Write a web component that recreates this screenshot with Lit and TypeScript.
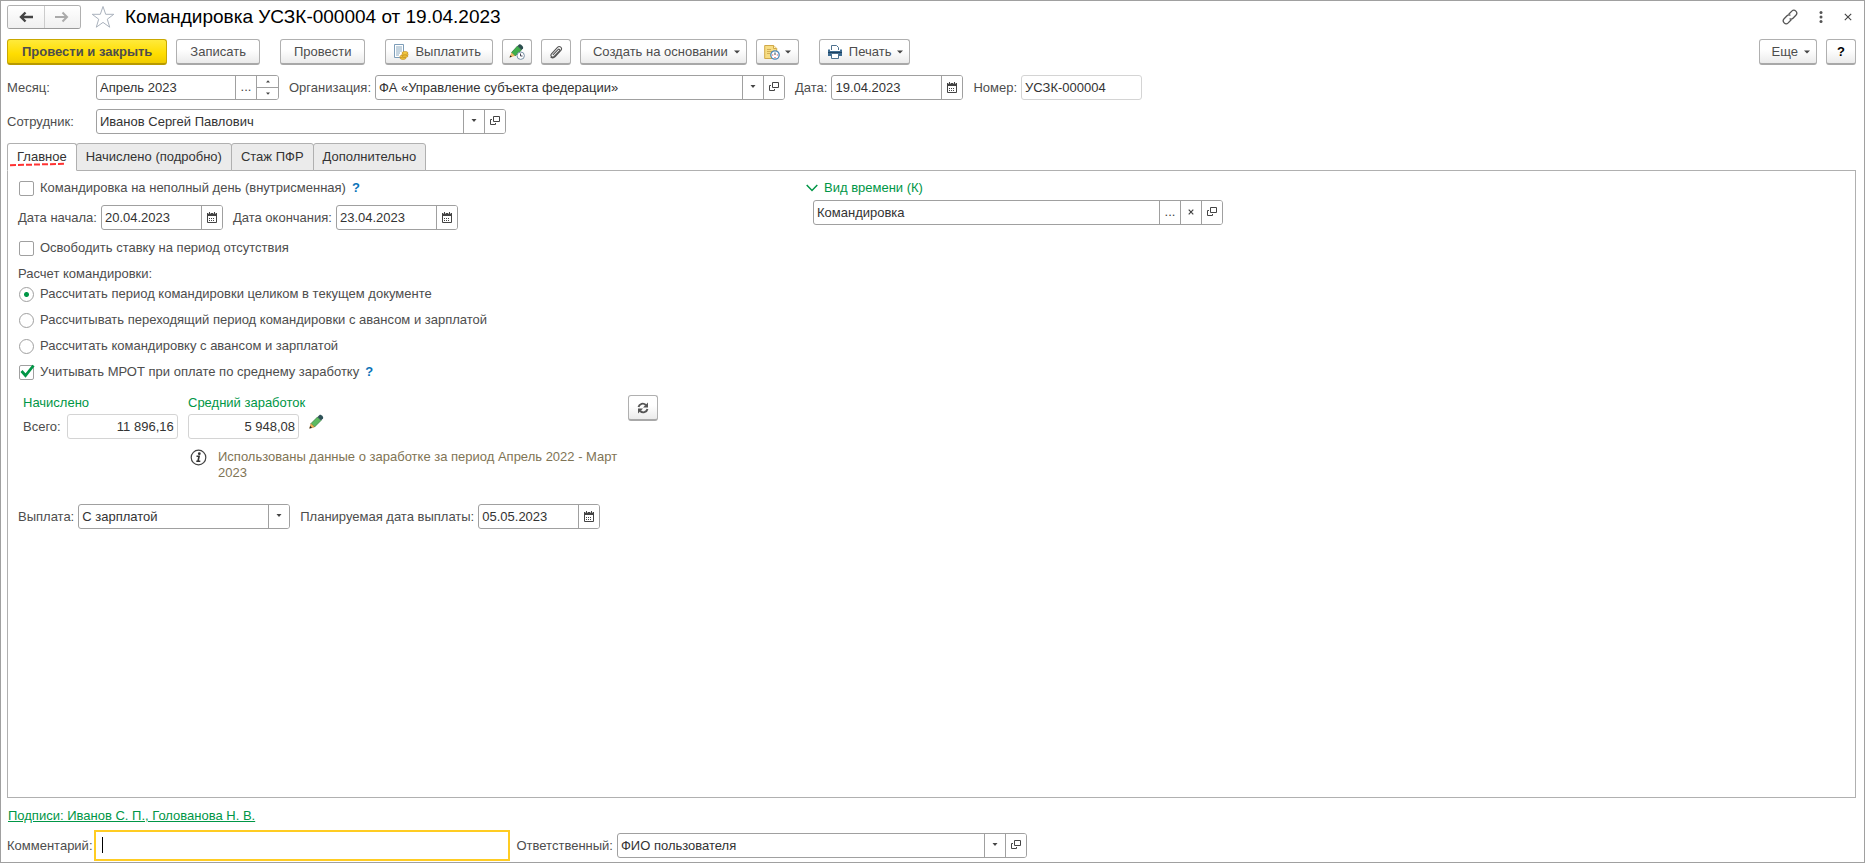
import { LitElement, html, css, svg, nothing } from "lit";
import { customElement, property } from "lit/decorators.js";

const box = (w: number, h: number, body: unknown) =>
  html`<svg width=${w} height=${h} viewBox="0 0 ${w} ${h}" aria-hidden="true">${body}</svg>`;

const icons = {
  back: box(14, 12, svg`<path d="M6.500 1.500 2 6l4.500 4.500M2 6h12" fill="none" stroke="#444" stroke-width="2.400"/>`),
  forward: box(14, 12, svg`<path d="M7.500 1.500 12 6l-4.500 4.500M12 6H0" fill="none" stroke="#aaa" stroke-width="2"/>`),
  star: box(24, 24, svg`<path d="M12 1.500l2.700 7.800h8.100l-6.500 4.900 2.400 8-6.700-4.800-6.700 4.800 2.400-8-6.500-4.900h8.100z" fill="#fff" stroke="#aab2bd"/>`),
  link: box(16, 16, svg`<g fill="none" stroke="#555" stroke-width="1.300" stroke-linecap="round"><path d="M7 5l2.800-2.900a2.900 2.900 0 0 1 4.100 4.100L11 9.200a2.900 2.900 0 0 1-3 .7"/><path d="M9 11l-2.800 2.900a2.900 2.900 0 0 1-4.100-4.100L5 6.800a2.900 2.900 0 0 1 3-.7"/></g>`),
  dots: box(4, 12, svg`<g fill="#555"><circle cx="2" cy="1.600" r="1.500"/><circle cx="2" cy="6" r="1.500"/><circle cx="2" cy="10.400" r="1.500"/></g>`),
  close: box(8, 8, svg`<path d="M.8.8l6.400 6.400M7.200.8.8 7.200" stroke="#444" stroke-width="1.100"/>`),
  clear: box(6, 6, svg`<path d="M.7.7l4.600 4.600M5.300.7.7 5.300" stroke="#444" stroke-width="1.200"/>`),
  caret: box(6, 4, svg`<path d="M0 .5h6L3 3.500z" fill="#444"/>`),
  smallCaret: box(6, 4, svg`<path d="M.5 0h5L3 3z" fill="#444"/>`),
  up: box(4, 3, svg`<path d="M0 2.500h4L2 .2z" fill="#444"/>`),
  down: box(4, 3, svg`<path d="M0 .5h4L2 2.800z" fill="#444"/>`),
  open: box(10, 10, svg`<g fill="none" stroke="#444"><path d="M3.500.5h6v5h-6z"/><path d="M2 3.500H.5v5h5V7"/></g>`),
  calendar: box(10, 11, svg`<path d="M.5 2.500h9v8h-9z" fill="#fff" stroke="#444"/><path d="M0 1h10v3H0z" fill="#444"/><path d="M2.500 0v2M7.500 0v2" stroke="#444"/><path d="M1.500 1v1M3.500 1v1M6.500 1v1M8.500 1v1" stroke="#fff" stroke-width=".6"/><path d="M2 6.500h6M2 8.500h6" stroke="#444" stroke-dasharray="1 1"/>`),
  pay: box(16, 16, svg`<path d="M1.500.5h9v13h-9z" fill="#fff" stroke="#7d9db8"/><path d="M3 3h6M3 5h6M3 7h6M3 9h4M3 11h3" stroke="#8aa9c0"/><g fill="#f6cf45" stroke="#c08a1c" stroke-width=".7"><ellipse cx="10" cy="14" rx="3" ry="1.400"/><ellipse cx="10" cy="12.500" rx="3" ry="1.400"/><ellipse cx="12" cy="12" rx="3" ry="1.400"/><ellipse cx="12" cy="10.500" rx="3" ry="1.400"/><ellipse cx="12" cy="9" rx="3" ry="1.400"/></g>`),
  pencilClock: box(16, 16, svg`<path d="M2.500 8.500 8.500 2 12.500 6 6 12z" fill="#3fae4b" stroke="#237a33" stroke-width=".7"/><path d="M8.500 2 10 .5c1.500-.9 5 2.200 4 4L12.500 6z" fill="#2c4f4e"/><path d="M.5 13.500 2.500 8.500 6 12z" fill="#efb765"/><path d="M.5 13.500l.9-2.200 1.500 1.400z" fill="#222"/><circle cx="11.700" cy="11.700" r="3.700" fill="#fff" stroke="#7891a6"/><path d="M11.500 9.500v2.500h2" fill="none" stroke="#445"/>`),
  clip: box(14, 14, svg`<path d="M4.200 9.700 9 4.600c1-1 2.400.3 1.500 1.300l-5.300 5.500c-1.800 1.800-4.400-.6-2.700-2.500l6-6.500c2.100-2.200 5.300.7 3.400 3l-5.700 6.200c-1.300 1.300-2.900 1.600-4.200.6" fill="none" stroke="#555" stroke-width="1.100" stroke-linecap="round"/>`),
  noteClock: box(16, 16, svg`<path d="M.7 1.500h9l3 3v10h-12z" fill="#f7dd83" stroke="#d0a94b"/><path d="M9.500 1.500v3h3" fill="#fff3c4" stroke="#d0a94b"/><path d="M3 5.500h4M3 7.500h5M3 9.500h3" stroke="#d3ae55"/><circle cx="11" cy="11" r="4.200" fill="#fff" stroke="#4c86b8" stroke-width="1.300"/><path d="M11 11V8.500" stroke="#345"/><path d="M8.200 11h1M12.800 11h1M11 13v1" stroke="#d33"/>`),
  printer: box(16, 16, svg`<path d="M4.500 6V1.500h5l2 2V6" fill="#fff" stroke="#4d718f"/><path d="M1 5.500h2v1.500h10V5.500h2V12H1z" fill="#3e6c92"/><path d="M1 8.500h14" stroke="#1d4261"/><path d="M4.500 9.500h7v5h-7z" fill="#fff" stroke="#4d718f"/>`),
  pencil: box(15, 15, svg`<path d="M2 9.500 8.500 3 12 6.500 5.500 13z" fill="#5cba5f" stroke="#2f7d3b" stroke-width=".7"/><path d="M8.500 3 10.500 1c1.500-.9 4.500 2 3.500 3.500l-2 2z" fill="#2f5257"/><path d="M.7 14.300 2 9.500 5.500 13z" fill="#f0b154" stroke="#a8762c" stroke-width=".5"/><path d="M.4 14.600l.8-2.600 1.800 1.800z" fill="#222"/>`),
  refresh: box(12, 12, svg`<g fill="none" stroke="#555" stroke-width="1.900"><path d="M1.500 5A4.300 4.300 0 0 1 8.800 3"/><path d="M10.500 7A4.300 4.300 0 0 1 3.200 9"/></g><path d="M11 .5V5.500H6zM1 11.500V6.500h5z" fill="#555"/>`),
  info: box(17, 17, svg`<circle cx="8.500" cy="8.500" r="7.300" fill="#fff" stroke="#444" stroke-width="1.200"/><circle cx="9.300" cy="4.700" r="1.400" fill="#333"/><path d="M6.500 7.300h2.600l-1.100 4.900M6.300 12.300h4" fill="none" stroke="#333" stroke-width="1.600"/>`),
  chevron: box(12, 8, svg`<path d="M.7 1 6 6.500 11.300 1" fill="none" stroke="#009646" stroke-width="1.500"/>`),
  tick: box(17, 15, svg`<path d="M2.500 7 6.500 11.500 14.500 1.500" fill="none" stroke="#009646" stroke-width="2.800"/>`),
};

type Action = "dots" | "spin" | "list" | "open" | "date" | "clear";

const titles: Record<string, string> = {
  dots: "Выбрать", list: "Показать список", open: "Открыть", date: "Выбрать дату", clear: "Очистить",
};

@customElement("form-field")
export class FormField extends LitElement {
  @property() label = "";
  @property() value = "";
  @property({ attribute: false }) actions: Action[] = [];
  @property({ type: Boolean }) locked = false;
  @property({ type: Boolean }) numeric = false;
  @property({ type: Boolean }) choice = false;
  @property({ type: Boolean }) active = false;

  static styles = css`
    :host { display: flex; align-items: center; gap: 4px; font: 13px/16px "Liberation Sans", Arial, sans-serif; min-width: 0; }
    label { color: #4d4d4d; white-space: nowrap; width: var(--label-width, auto); flex: none; }
    .frame { position: relative; display: flex; box-sizing: border-box; width: var(--field-width, 122px); height: 25px; border: 1px solid #a0a0a0; border-radius: 3px; background: #fff; overflow: hidden; }
    .locked { border-color: #d4d4d4; }
    .active { height: 31px; border: 2px solid #ffcc22; border-radius: 0; }
    input, select { flex: 1; min-width: 0; width: 0; border: 0; outline: 0; margin: 0; padding: 0 3px; background: none; font: inherit; color: #333; appearance: none; }
    .numeric input { text-align: right; }
    .cursor { position: absolute; left: 6px; top: 5px; width: 1px; height: 16px; background: #000; }
    button, .mark { display: flex; align-items: center; justify-content: center; box-sizing: border-box; width: 21px; flex: none; padding: 0 0 1px; border: 0; border-left: 1px solid #a0a0a0; background: #fff; color: #444; font: inherit; }
    .mark { position: absolute; right: 0; top: 0; bottom: 0; pointer-events: none; }
    .spin { display: flex; flex-direction: column; width: 21px; border-left: 1px solid #a0a0a0; }
    .spin button { flex: 1; width: auto; padding: 0; border-left: 0; }
    .spin button + button { border-top: 1px solid #a0a0a0; }
  `;

  private action(a: Action) {
    if (a === "spin") {
      return html`<div class="spin"><button aria-label="Следующий">${icons.up}</button><button aria-label="Предыдущий">${icons.down}</button></div>`;
    }
    const face = { dots: "...", list: icons.smallCaret, open: icons.open, date: icons.calendar, clear: icons.clear }[a];
    return html`<button aria-label=${titles[a]}>${face}</button>`;
  }

  render() {
    const state = `frame ${this.locked ? "locked" : ""} ${this.numeric ? "numeric" : ""} ${this.active ? "active" : ""}`;
    return html`
      ${this.label ? html`<label for="control">${this.label}</label>` : nothing}
      <div class=${state}>
        ${this.choice
          ? html`<select id="control"><option>${this.value}</option></select><span class="mark">${icons.smallCaret}</span>`
          : html`<input id="control" type="text" .value=${this.value} ?readonly=${this.locked} />`}
        ${this.active ? html`<span class="cursor"></span>` : nothing}
        ${this.actions.map((a) => this.action(a))}
      </div>`;
  }
}

@customElement("app-root")
export class AppRoot extends LitElement {
  static styles = css`
    :host { display: flex; flex-direction: column; box-sizing: border-box; min-height: 100vh; padding: 4px 8px 1px 6px; border: 1px solid #a0a0a0; background: #fff; color: #4d4d4d; font: 13px/16px "Liberation Sans", Arial, sans-serif; }
    button { font: inherit; color: inherit; }
    svg { flex: none; }
    .row { display: flex; align-items: center; gap: 10px; }
    .titlebar { height: 24px; }
    .nav { display: flex; box-sizing: border-box; width: 74px; height: 24px; border: 1px solid #b0b0b0; border-bottom-color: #999; border-radius: 3px; overflow: hidden; }
    .nav button { flex: 1; display: flex; align-items: center; justify-content: center; padding: 0; border: 0; background: linear-gradient(#fff, #f0f0f0); }
    .nav button + button { border-left: 1px solid #ccc; }
    .plain { display: flex; align-items: center; justify-content: center; padding: 0; border: 0; background: none; }
    h1 { margin: 0; font-size: 19px; line-height: 24px; font-weight: 400; color: #000; }
    .push { margin-left: auto; }
    .window { display: flex; align-items: center; gap: 21px; padding-right: 4px; }
    .toolbar { margin-top: 10px; gap: 9px; }
    .cmd { display: flex; align-items: center; justify-content: center; gap: 8px; box-sizing: border-box; height: 26px; padding: 0 13px; border: 1px solid #b0b0b0; border-bottom: 2px solid #a8a8a8; border-radius: 3px; background: linear-gradient(#fff 40%, #ebebeb); white-space: nowrap; }
    .primary { padding: 0 14px; border-color: #c9a800; border-bottom-color: #b89a00; background: linear-gradient(#ffea3b, #ffdd00 60%, #f0cc00); font-weight: 700; }
    .icon { padding: 0; width: 30px; }
    .tight { padding: 0 7px; gap: 5px; }
    .menu { gap: 6px; padding: 0 6px 0 12px; }
    .left { padding-left: 7px; }
    .gap { margin-left: 11px; }
    .pay-cmd { gap: 6px; padding: 0 11px 0 7px; }
    .help { width: 30px; padding: 0; color: #000; font-weight: 700; }
    .fields { margin-top: 10px; }
    .fields + .fields { margin-top: 9px; }
    .head { --label-width: 85px; --field-width: 183px; }
    .wide { --field-width: 410px; }
    .date { --field-width: 132px; }
    .number { --field-width: 121px; }
    .tabs { display: flex; margin-top: 9px; }
    .tab { position: relative; box-sizing: border-box; height: 28px; margin: 0 0 0 -1px; padding: 0 9px; border: 1px solid #b0b0b0; border-radius: 3px 3px 0 0; background: #ebebeb; color: #333; }
    .tab.current { z-index: 1; margin: 0; border-bottom-color: #fff; background: #fff; }
    .scribble { position: absolute; left: 1px; top: 18px; }
    .panel { flex: 1; display: grid; grid-template-columns: 788px 1fr; align-content: start; margin-top: -1px; padding: 9px 10px; border: 1px solid #b0b0b0; }
    .col { display: flex; flex-direction: column; align-items: flex-start; }
    .check { display: flex; align-items: center; gap: 6px; height: 16px; padding-left: 1px; }
    .check input { box-sizing: border-box; width: 15px; height: 15px; margin: 0; border: 1px solid #a0a0a0; border-radius: 2px; background: #fff; appearance: none; }
    .check input[type="radio"] { border-radius: 50%; }
    .check input[type="radio"]:checked { background: radial-gradient(circle, #009646 2px, #fff 3px); }
    .tick { position: relative; display: flex; }
    .tick svg { position: absolute; left: 0; top: -1px; pointer-events: none; }
    .hint { color: #0a73b8; text-decoration: none; font-weight: 700; }
    .radios { display: flex; flex-direction: column; gap: 10px; margin: 0; padding: 0; border: 0; }
    .radios legend { padding: 0; margin-bottom: 4px; }
    .s9 { margin-top: 9px; }
    .s10 { margin-top: 10px; }
    .totals { display: grid; grid-template-columns: 165px 1fr 30px; width: 640px; margin-top: 15px; padding-left: 5px; box-sizing: border-box; }
    .green { color: #009646; }
    .amount { --field-width: 111px; gap: 6px; }
    .sum { display: flex; align-items: flex-start; gap: 10px; margin-top: 3px; }
    .note { display: flex; align-items: flex-start; gap: 11px; margin: 10px 0 0 2px; color: #7f7455; }
    .note p { margin: 0; width: 400px; }
    .refresh { margin: 0; align-self: start; padding: 0; width: 30px; }
    .pay { margin-top: 23px; }
    .choice { --field-width: 212px; }
    .group { display: flex; align-items: center; gap: 6px; padding: 0; border: 0; background: none; }
    .kind { margin: 4px 0 0 7px; }
    .sign { align-self: flex-start; margin: 10px 0 0 1px; color: #009646; }
    .footer { margin-top: 6px; gap: 7px; }
    .comment { --field-width: 416px; gap: 1px; }
  `;

  private option(type: "checkbox" | "radio", id: string, label: string, checked = false, hint = false) {
    return html`<div class="check">
      <span class="tick"><input type=${type} id=${id} name=${type === "radio" ? "calc" : id} ?checked=${checked} />
        ${type === "checkbox" && checked ? icons.tick : nothing}</span>
      <label for=${id}>${label}</label>
      ${hint ? html`<a class="hint" href="#" aria-label="Подсказка">?</a>` : nothing}
    </div>`;
  }

  render() {
    return html`
      <header class="row titlebar">
        <div class="nav"><button aria-label="Назад">${icons.back}</button><button aria-label="Вперед">${icons.forward}</button></div>
        <button class="plain" aria-label="В избранное">${icons.star}</button>
        <h1>Командировка УСЗК-000004 от 19.04.2023</h1>
        <div class="push window">
          <button class="plain" aria-label="Ссылка">${icons.link}</button>
          <button class="plain" aria-label="Меню">${icons.dots}</button>
          <button class="plain" aria-label="Закрыть">${icons.close}</button>
        </div>
      </header>
      <div class="row toolbar">
        <button class="cmd primary">Провести и закрыть</button>
        <button class="cmd">Записать</button>
        <button class="cmd gap">Провести</button>
        <button class="cmd pay-cmd gap">${icons.pay}Выплатить</button>
        <button class="cmd icon" aria-label="Исправить">${icons.pencilClock}</button>
        <button class="cmd icon" aria-label="Файлы">${icons.clip}</button>
        <button class="cmd menu">Создать на основании${icons.caret}</button>
        <button class="cmd tight" aria-label="Напоминание">${icons.noteClock}${icons.caret}</button>
        <button class="cmd menu left gap">${icons.printer}Печать${icons.caret}</button>
        <button class="cmd menu push">Еще${icons.caret}</button>
        <button class="cmd help">?</button>
      </div>
      <div class="row fields">
        <form-field class="head" label="Месяц:" value="Апрель 2023" .actions=${["dots", "spin"]}></form-field>
        <form-field class="wide" label="Организация:" value="ФА «Управление субъекта федерации»" .actions=${["list", "open"]}></form-field>
        <form-field class="date" label="Дата:" value="19.04.2023" .actions=${["date"]}></form-field>
        <form-field class="number" label="Номер:" value="УСЗК-000004" locked></form-field>
      </div>
      <div class="row fields">
        <form-field class="head wide" label="Сотрудник:" value="Иванов Сергей Павлович" .actions=${["list", "open"]}></form-field>
      </div>
      <nav class="tabs" role="tablist">
        <button class="tab current" role="tab" aria-selected="true">Главное<svg class="scribble" width="58" height="5" viewBox="0 0 58 5" aria-hidden="true"><path d="M1 3.200 55 1.800" stroke="#f33" stroke-width="2" stroke-dasharray="6 2"/></svg></button>
        <button class="tab" role="tab">Начислено (подробно)</button>
        <button class="tab" role="tab">Стаж ПФР</button>
        <button class="tab" role="tab">Дополнительно</button>
      </nav>
      <main class="panel">
        <div class="col">
          ${this.option("checkbox", "partial", "Командировка на неполный день (внутрисменная)", false, true)}
          <div class="row s9">
            <form-field label="Дата начала:" value="20.04.2023" .actions=${["date"]}></form-field>
            <form-field label="Дата окончания:" value="23.04.2023" .actions=${["date"]}></form-field>
          </div>
          <div class="s10">${this.option("checkbox", "release", "Освободить ставку на период отсутствия")}</div>
          <fieldset class="radios s10">
            <legend>Расчет командировки:</legend>
            ${this.option("radio", "whole", "Рассчитать период командировки целиком в текущем документе", true)}
            ${this.option("radio", "carry", "Рассчитывать переходящий период командировки с авансом и зарплатой")}
            ${this.option("radio", "advance", "Рассчитать командировку с авансом и зарплатой")}
          </fieldset>
          <div class="s10">${this.option("checkbox", "mrot", "Учитывать МРОТ при оплате по среднему заработку", true, true)}</div>
          <section class="totals">
            <div>
              <div class="green">Начислено</div>
              <div class="sum"><form-field class="amount" label="Всего:" value="11 896,16" numeric locked></form-field></div>
            </div>
            <div>
              <div class="green">Средний заработок</div>
              <div class="sum"><form-field class="amount" value="5 948,08" numeric locked></form-field><button class="plain" aria-label="Изменить">${icons.pencil}</button></div>
              <div class="note">${icons.info}<p>Использованы данные о заработке за период Апрель 2022 - Март 2023</p></div>
            </div>
            <button class="cmd refresh" aria-label="Пересчитать">${icons.refresh}</button>
          </section>
          <div class="row pay">
            <form-field class="choice" label="Выплата:" value="С зарплатой" choice></form-field>
            <form-field label="Планируемая дата выплаты:" value="05.05.2023" .actions=${["date"]}></form-field>
          </div>
        </div>
        <div class="col">
          <button class="group green" aria-expanded="true">${icons.chevron}Вид времени (К)</button>
          <form-field class="wide kind" value="Командировка" .actions=${["dots", "clear", "open"]}></form-field>
        </div>
      </main>
      <a class="sign" href="#">Подписи: Иванов С. П., Голованова Н. В.</a>
      <footer class="row footer">
        <form-field class="comment" label="Комментарий:" active></form-field>
        <form-field class="wide" label="Ответственный:" value="ФИО пользователя" .actions=${["list", "open"]}></form-field>
      </footer>`;
  }
}
